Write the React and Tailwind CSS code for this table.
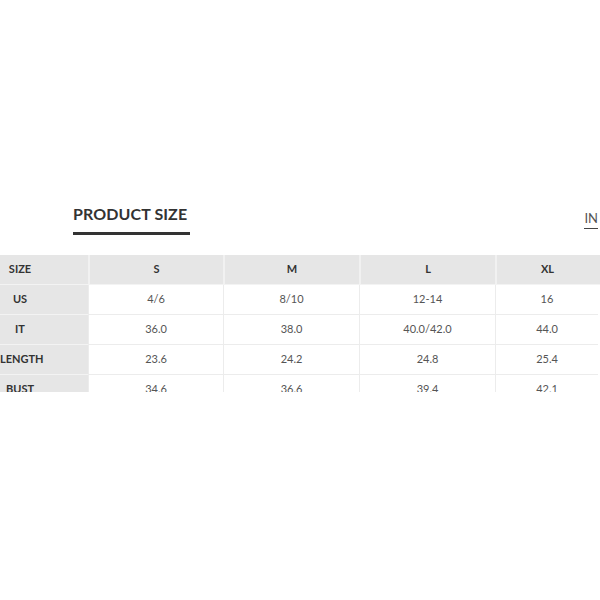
const sizes = ["S", "M", "L", "XL"];

const rows = [
  { label: "US", values: ["4/6", "8/10", "12-14", "16"] },
  { label: "IT", values: ["36.0", "38.0", "40.0/42.0", "44.0"] },
  { label: "LENGTH", values: ["23.6", "24.2", "24.8", "25.4"] },
  { label: "BUST", values: ["34.6", "36.6", "39.4", "42.1"] },
];

const cols = "grid grid-cols-[88px_135px_136px_136px_103px]";

const App = () => {
  return (
    <div className="w-[600px] h-[600px] bg-white overflow-hidden font-['Lato','Liberation_Sans',sans-serif]">
      <div className="flex justify-between items-start pt-[204px]">
        <div className="pl-[73px]">
          <h2 className="text-[16px] leading-[20px] font-bold text-[#333] tracking-[0.1px]">
            PRODUCT SIZE
          </h2>
          <div className="mt-[8px] h-[3px] w-[117px] bg-[#333]"></div>
        </div>
        <div className="pr-[2px] pt-[6px]">
          <span className="block text-[13px] leading-[16px] text-[#555] border-b-[1.5px] border-[#444] pb-[2px]">
            IN
          </span>
        </div>
      </div>

      <div className="mt-[20px] h-[137px] overflow-hidden">
        <div className={`${cols} h-[30px] bg-[#e6e6e6] border-b border-[#f3f3f3]`}>
          <div className="flex items-center">
            <span className="w-10 text-center text-[11px] font-bold text-[#333]">SIZE</span>
          </div>
          {sizes.map((s) => (
            <div
              key={s}
              className="flex items-center justify-center border-l-2 border-[#f1f1f1] text-[11px] font-bold text-[#333]"
            >
              {s}
            </div>
          ))}
        </div>
        {rows.map((row) => (
          <div key={row.label} className={`${cols} h-[30px]`}>
            <div className="flex items-center bg-[#e6e6e6] border-b border-[#f3f3f3]">
              <span className="w-10 text-center text-[11px] font-bold text-[#333]">
                {row.label}
              </span>
            </div>
            {row.values.map((v, i) => (
              <div
                key={i}
                className="flex items-center justify-center border-l border-b border-[#ececec] text-[11px] text-[#555]"
              >
                {v}
              </div>
            ))}
          </div>
        ))}
      </div>
    </div>
  );
};

export default App;
